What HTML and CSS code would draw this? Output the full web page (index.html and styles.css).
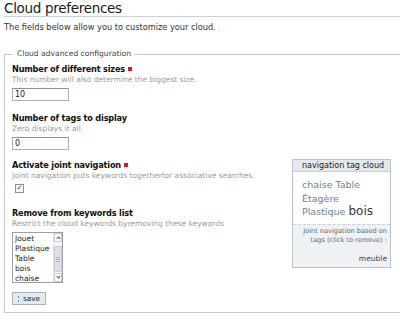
FILE: index.html
```html
<!DOCTYPE html>
<html lang="en">
<head>
  <meta charset="UTF-8">
  <title>Cloud preferences</title>
  <link rel="stylesheet" href="styles.css">
</head>
<body>
  <h1 class="page-title">Cloud preferences</h1>
  <p class="intro">The fields below allow you to customize your cloud.</p>
  <form class="prefs">
    <fieldset class="box">
      <legend>Cloud advanced configuration</legend>
      <div class="cols">
        <div class="fields">
          <div class="field field-first">
            <label>Number of different sizes <span class="req"></span></label>
            <div class="help">This number will also determine the biggest size.</div>
            <input type="text" class="txt" value="10">
          </div>
          <div class="field">
            <label>Number of tags to display</label>
            <div class="help">Zero displays it all.</div>
            <input type="text" class="txt" value="0">
          </div>
          <div class="field field-check">
            <label>Activate joint navigation <span class="req"></span></label>
            <div class="help">Joint navigation puts keywords togetherfor associative searches.</div>
            <span class="check">&#10003;</span>
          </div>
          <div class="field">
            <label>Remove from keywords list</label>
            <div class="help">Restrict the cloud keywords byremoving these keywords</div>
            <div class="list">
              <div class="list-items">
                <div>Jouet</div>
                <div>Plastique</div>
                <div>Table</div>
                <div>bois</div>
                <div>chaise</div>
              </div>
              <div class="scroll">
                <span class="arr arr-up"></span>
                <span class="thumb"><i></i><i></i><i></i></span>
                <span class="arr arr-down"></span>
              </div>
            </div>
          </div>
          <button type="button" class="save"><span class="dots"><i></i><i></i></span>save</button>
        </div>
        <div class="side">
          <div class="cloud">
            <div class="cloud-head">navigation tag cloud</div>
            <div class="cloud-tags">
              <a>chaise</a> <a>Table</a><br>
              <a>Étagère</a><br>
              <a>Plastique</a> <a class="big">bois</a>
            </div>
            <div class="cloud-foot">
              <p>Joint navigation based on<br>tags (click to remove) :</p>
              <a>meuble</a>
            </div>
          </div>
        </div>
      </div>
    </fieldset>
  </form>
</body>
</html>
```
FILE: styles.css
```css
* { margin: 0; padding: 0; box-sizing: border-box; }
body {
  font-family: 'DejaVu Sans', Verdana, sans-serif;
  color: #333;
  background: #fff;
  padding-left: 4px;
  overflow: hidden;
}
.page-title {
  font-size: 13.5px;
  letter-spacing: -0.3px;
  font-weight: normal;
  color: #1a1a1a;
  line-height: 16px;
  border-bottom: 1px solid #c6d2d8;
  margin-right: -10px;
}
.intro {
  margin-top: 5px;
  font-size: 8.2px;
  line-height: 10px;
  color: #333;
}
.prefs { margin-top: 17px; }
.box {
  border: 1px solid #c6cacd;
  border-right: none;
  margin-right: -20px;
  padding: 5px 0 7px 7px;
}
.box legend {
  margin-left: 1px;
  padding: 0 4px;
  color: #444;
  font-size: 7.6px;
  line-height: 10px;
}
.cols { display: flex; }
.fields { width: 280px; }
.field { margin-bottom: 10px; }
.field-first { margin-bottom: 12px; }
.field label {
  display: block;
  font-weight: bold;
  font-size: 8.2px;
  letter-spacing: -0.2px;
  color: #111;
  line-height: 11px;
}
.req {
  display: inline-block;
  width: 4px;
  height: 4px;
  background: #e0141e;
  vertical-align: 1px;
}
.help {
  color: #9a9a9a;
  font-size: 7.5px;
  line-height: 10px;
  margin-bottom: 3px;
}
.txt {
  display: block;
  width: 57px;
  height: 13px;
  border: 1px solid #a9b0b6;
  border-top-color: #8c9298;
  font: 8px 'DejaVu Sans', sans-serif;
  padding: 0 2px;
  color: #222;
}
.field-check { margin-bottom: 15px; }
.check {
  display: block;
  width: 9px;
  height: 9px;
  margin: 0 0 0 3px;
  border: 1px solid #8e9498;
  font-size: 7px;
  line-height: 7px;
  text-align: center;
  color: #333;
}
.list {
  display: flex;
  width: 51px;
  height: 51px;
  border: 1px solid #9aa0a6;
}
.list-items {
  flex: 1;
  padding: 1px 2px;
  font-size: 7.5px;
  line-height: 10px;
  color: #222;
  overflow: hidden;
}
.scroll {
  width: 9px;
  display: flex;
  flex-direction: column;
  background: #f4f5f7;
  border-left: 1px solid #dfe2e6;
}
.arr {
  height: 9px;
  border: 1px solid #c8ccd2;
  background: #fbfbfc;
  position: relative;
}
.arr::after {
  content: "";
  position: absolute;
  left: 2px;
  top: 3px;
  width: 2px;
  height: 2px;
  border-left: 1px solid #555;
  border-top: 1px solid #555;
  transform: rotate(45deg);
}
.arr-down::after { top: 1px; transform: rotate(225deg); }
.thumb {
  margin-top: 4px;
  height: 26px;
  background: #dcdfe4;
  border: 1px solid #c8ccd2;
  display: flex;
  flex-direction: column;
  justify-content: center;
  align-items: center;
  gap: 1px;
}
.thumb i { display: block; width: 4px; height: 1px; background: #aab0b8; }
.arr-down { margin-top: auto; }
.save {
  display: flex;
  align-items: center;
  height: 13px;
  width: 34px;
  padding: 0 4px 0 5px;
  border: 1px solid #a6b6be;
  background: #e3eaee;
  font: 7.3px 'DejaVu Sans', sans-serif;
  color: #223;
  margin-top: -1px;
}
.save .dots {
  display: flex;
  flex-direction: column;
  gap: 2px;
  margin-right: 4px;
}
.save .dots i { display: block; width: 1px; height: 2px; background: #5c8fb8; }
.side { padding-top: 95px; }
.cloud {
  width: 99px;
  border: 1px solid #b9c5cc;
  background: #fff;
}
.cloud-head {
  background: #e4e9ed;
  border-bottom: 1px solid #c9d1d7;
  font-size: 8px;
  line-height: 11px;
  padding-left: 9px;
  color: #222;
}
.cloud-tags {
  padding: 6px 8px 5px 9px;
  font-size: 9.5px;
  line-height: 13.5px;
  color: #6d8690;
}
.cloud-tags .big { font-size: 12px; color: #1f3b4a; }
.cloud-foot {
  border-top: 1px dashed #c9d1d7;
  background: #eef2f4;
  text-align: right;
  padding: 2px 3px 4px;
  font-size: 6.6px;
  color: #666;
  line-height: 9px;
}
.cloud-foot a {
  display: block;
  margin-top: 9px;
  font-size: 7.5px;
  color: #445;
}
```
